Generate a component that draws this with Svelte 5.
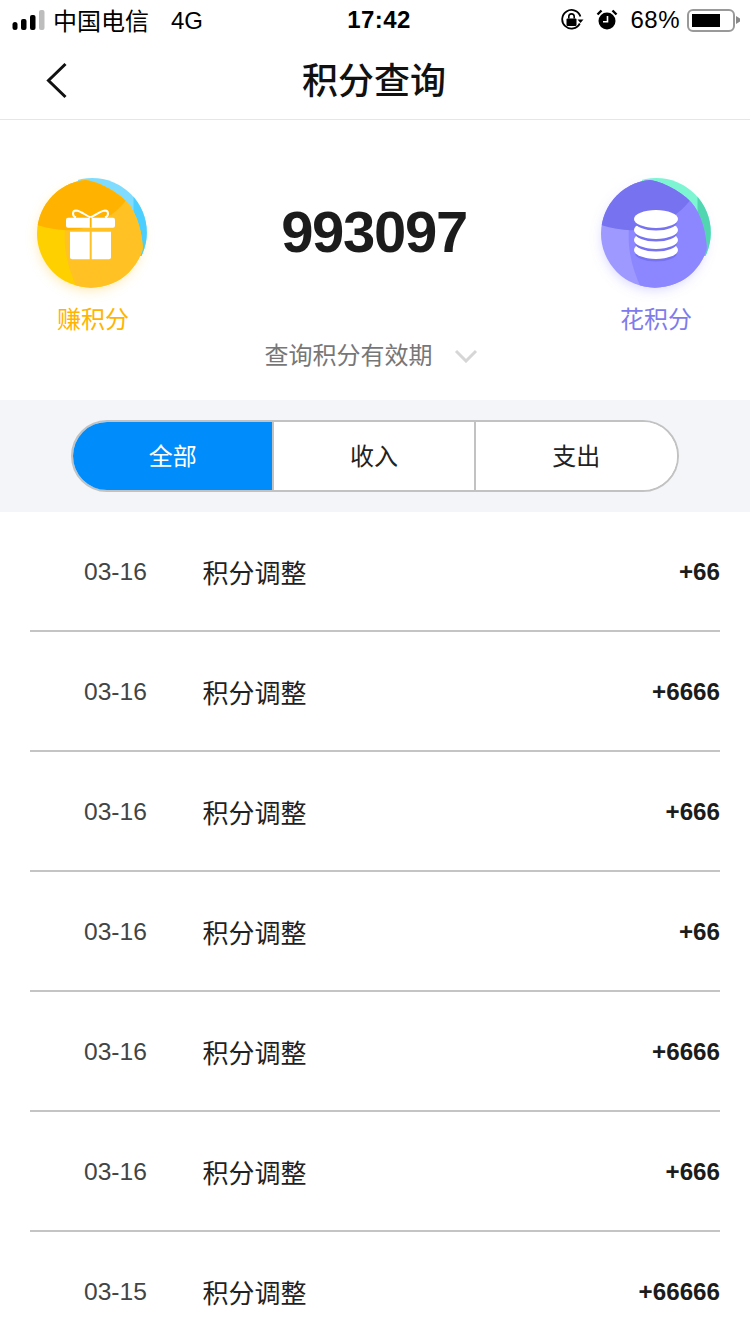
<script>
  const tabs = ['全部', '收入', '支出'];
  let active = $state(0);

  const coinLayers = [72, 62, 52, 41];

  const records = [
    { date: '03-16', name: '积分调整', value: '+66' },
    { date: '03-16', name: '积分调整', value: '+6666' },
    { date: '03-16', name: '积分调整', value: '+666' },
    { date: '03-16', name: '积分调整', value: '+66' },
    { date: '03-16', name: '积分调整', value: '+6666' },
    { date: '03-16', name: '积分调整', value: '+666' },
    { date: '03-15', name: '积分调整', value: '+66666' }
  ];
</script>

{#snippet orb(id, back, backDark, low, mid, top, glow)}
  <defs>
    <clipPath id="{id}-circle"><circle cx="54" cy="55.7" r="54" /></clipPath>
    <clipPath id="{id}-edge"><path d="M-5-5H41V1C60 2 78 12 90 24C100 35 106 55 106 75L112 115H-5Z" /></clipPath>
    <clipPath id="{id}-back"><circle cx="55.3" cy="54.5" r="54.5" /></clipPath>
    <filter id="{id}-blur" x="-30%" y="-30%" width="160%" height="160%"><feGaussianBlur stdDeviation="6" /></filter>
  </defs>
  <circle cx="53" cy="60" r="52" fill={glow} filter="url(#{id}-blur)" />
  <g clip-path="url(#{id}-back)">
    <rect x="41" y="-2" width="72" height="80" fill={back} />
    <rect x="96.5" y="15" width="16" height="63" fill={backDark} />
  </g>
  <g clip-path="url(#{id}-circle)">
    <g clip-path="url(#{id}-edge)">
      <rect x="-3" y="-3" width="116" height="116" fill={low} />
      <path d="M28 50C26 75 33 95 41 112H112V-3H28Z" fill={mid} />
      <path d="M-3 46C20 54 40 54 55 47C72 40 82 32 90 21L70-5H-3Z" fill={top} />
    </g>
  </g>
{/snippet}

<div class="page">
  <div class="status">
    <div class="status-left">
      <svg class="signal" width="34" height="22" viewBox="0 0 34 22">
        <rect x="0.5" y="13" width="5" height="8" rx="2.5" fill="#000" />
        <rect x="9" y="10" width="5.5" height="11" rx="2" fill="#000" />
        <rect x="18" y="6" width="5.5" height="15" rx="2" fill="#000" />
        <rect x="27" y="1" width="5.5" height="20" rx="2" fill="#bdbdbd" />
      </svg>
      <span class="carrier">中国电信</span>
      <span class="net">4G</span>
    </div>
    <div class="time">17:42</div>
    <div class="status-right">
      <svg width="24" height="24" viewBox="0 0 24 24">
        <path d="M19.8 15.5A9.3 9.3 0 1 1 20.4 8.5" fill="none" stroke="#000" stroke-width="1.8" />
        <path d="M17.5 11.5h6l-3 3.5z" fill="#000" />
        <rect x="6.5" y="10.5" width="10" height="7.5" rx="1" fill="#000" />
        <path d="M8.8 10.5V8.6a2.7 2.7 0 0 1 5.4 0v1.9" fill="none" stroke="#000" stroke-width="1.6" />
      </svg>
      <svg class="alarm" width="22" height="22" viewBox="0 0 22 22">
        <circle cx="11" cy="12" r="8.5" fill="#000" />
        <path d="M11.5 7v5.8H7" fill="none" stroke="#fff" stroke-width="1.6" />
        <path d="M1.5 5.5L5.5 1.5M20.5 5.5L16.5 1.5" stroke="#000" stroke-width="2.4" />
      </svg>
      <span class="pct">68%</span>
      <div class="battery"><div class="charge"></div></div>
      <svg class="nib" width="4" height="8" viewBox="0 0 4 8"><path d="M0 0L4 2.5V5.5L0 8Z" fill="#888" /></svg>
    </div>
  </div>

  <div class="nav">
    <svg class="back" width="26" height="40" viewBox="0 0 26 40">
      <path d="M22.5 4L5.5 20.5L22.5 37" fill="none" stroke="#111" stroke-width="3" />
    </svg>
    <h1>积分查询</h1>
  </div>

  <div class="summary">
    <div class="summary-top">
      <div class="action earn">
        <svg class="orb" width="110" height="110" viewBox="0 0 110 110">
          {@render orb('gold', '#80dcff', '#4ccfff', '#ffd000', '#ffc124', '#ffb300', '#ffc93a66')}
          <path d="M53.7 39.5C48 37 44 33 39 32.5C35 32.5 35 38 39 39.5M53.7 39.5C59 37 63 33 68 32.5C72 32.5 72 38 68 39.5" fill="none" stroke="#fff" stroke-width="2" />
          <rect x="29" y="39.7" width="49" height="10" rx="2" fill="#fff" />
          <path d="M33 53.7H52.7V81.3H35A2 2 0 0 1 33 79.3Z" fill="#fff" />
          <path d="M54.7 53.7H74V79.3A2 2 0 0 1 72 81.3H54.7Z" fill="#fff" />
          <rect x="52.8" y="39.7" width="1.8" height="10" fill="#ffb300" />
        </svg>
        <span>赚积分</span>
      </div>
      <div class="total">993097</div>
      <div class="action spend">
        <svg class="orb" width="110" height="110" viewBox="0 0 110 110">
          {@render orb('violet', '#7ef5d2', '#52d6b2', '#9d99ff', '#8c87ff', '#7672f0', '#8c87ff55')}
          {#each coinLayers as cy}
            <ellipse cx="55" cy={cy + 3} rx="21" ry="8.6" fill="#7672f0" />
            <ellipse cx="55" {cy} rx="22" ry="9" fill="#fff" />
          {/each}
        </svg>
        <span>花积分</span>
      </div>
    </div>
    <div class="expiry">
      <span>查询积分有效期</span>
      <svg width="24" height="14" viewBox="0 0 24 14">
        <path d="M2 2L12 12L22 2" fill="none" stroke="#d6d6d6" stroke-width="3" />
      </svg>
    </div>
  </div>

  <div class="filter">
    <div class="tabs">
      {#each tabs as tab, i}
        <button class="tab" class:active={active === i} onclick={() => (active = i)}>{tab}</button>
      {/each}
    </div>
  </div>

  <div class="list">
    {#each records as r}
      <div class="row">
        <span class="date">{r.date}</span>
        <span class="name">{r.name}</span>
        <span class="value">{r.value}</span>
      </div>
    {/each}
  </div>
</div>

<style>
  :global(body) {
    background: #fff;
  }
  .page {
    width: 750px;
    height: 1334px;
    overflow: hidden;
    background: #fff;
    color: #222;
    font-family: "Liberation Sans", "Noto Sans CJK SC", sans-serif;
  }
  .status {
    height: 40px;
    padding: 0 10px 0 12px;
    display: grid;
    grid-template-columns: 1fr auto 1fr;
    align-items: center;
    font-size: 24px;
    color: #000;
  }
  .status-left {
    display: flex;
    align-items: center;
  }
  .signal {
    margin: 0 7px 0 0;
  }
  .carrier {
    margin-bottom: 2px;
  }
  .net {
    margin-left: 22px;
    margin-top: 1px;
  }
  .time {
    margin-left: 6px;
    font-size: 24px;
    font-weight: 700;
    letter-spacing: 0.4px;
  }
  .status-right {
    display: flex;
    align-items: center;
    justify-content: flex-end;
  }
  .alarm {
    margin-left: 12px;
  }
  .pct {
    margin-left: 12px;
    margin-right: 7px;
    letter-spacing: 0.5px;
  }
  .battery {
    width: 48px;
    height: 23px;
    box-sizing: border-box;
    border: 2px solid #999;
    border-radius: 6px;
    padding: 3px;
  }
  .charge {
    width: 28px;
    height: 100%;
    background: #000;
  }
  .nib {
    margin-left: 1px;
  }
  .nav {
    height: 79px;
    position: relative;
    display: flex;
    align-items: center;
    justify-content: center;
    border-bottom: 1px solid #e6e6e6;
  }
  .back {
    position: absolute;
    left: 43px;
    top: 20px;
  }
  h1 {
    margin: 0 2px 4px 0;
    font-size: 36px;
    font-weight: 500;
    color: #111;
  }
  .summary {
    height: 280px;
    box-sizing: border-box;
    padding: 58px 39px 0 37px;
  }
  .summary-top {
    display: flex;
    justify-content: space-between;
    align-items: flex-start;
  }
  .action {
    width: 110px;
    display: flex;
    flex-direction: column;
    align-items: center;
    font-size: 24px;
  }
  .action span {
    margin-top: 14px;
    line-height: 36px;
  }
  .orb {
    overflow: visible;
  }
  .earn {
    color: #ffb400;
  }
  .earn span {
    padding-left: 2px;
  }
  .spend {
    color: #7f7bec;
  }
  .total {
    margin-top: 22px;
    font-size: 58px;
    line-height: 64px;
    font-weight: 700;
    color: #1c1c1c;
    letter-spacing: -1.3px;
  }
  .expiry {
    display: flex;
    justify-content: center;
    align-items: center;
    gap: 21px;
    font-size: 24px;
    line-height: 36px;
    color: #777;
    padding-right: 6px;
  }
  .filter {
    height: 112px;
    box-sizing: border-box;
    padding: 20px 71px;
    background: #f3f5f9;
  }
  .tabs {
    height: 72px;
    box-sizing: border-box;
    border: 2px solid #c2c2c2;
    border-radius: 36px;
    overflow: hidden;
    display: grid;
    grid-template-columns: 1fr 1fr 1fr;
    background: #fff;
  }
  .tab {
    border: 0;
    border-right: 2px solid #c2c2c2;
    background: #fff;
    color: #222;
    padding: 0 0 4px;
    font: inherit;
    font-size: 24px;
  }
  .tab:last-child {
    border-right: 0;
  }
  .tab.active {
    background: #008dfb;
    color: #fff;
  }
  .list {
    display: flex;
    flex-direction: column;
  }
  .row {
    height: 120px;
    flex: none;
    box-sizing: border-box;
    margin: 0 30px;
    padding: 0 0 0 54px;
    display: flex;
    align-items: center;
    border-bottom: 2px solid #c4c4c4;
  }
  .date {
    width: 119px;
    padding-top: 2px;
    font-size: 24.6px;
    color: #444;
  }
  .name {
    font-size: 26px;
    margin-left: -0.5px;
    color: #222;
  }
  .value {
    margin-left: auto;
    padding-top: 2px;
    font-size: 24.2px;
    font-weight: 700;
    color: #1c1c1c;
  }
</style>
